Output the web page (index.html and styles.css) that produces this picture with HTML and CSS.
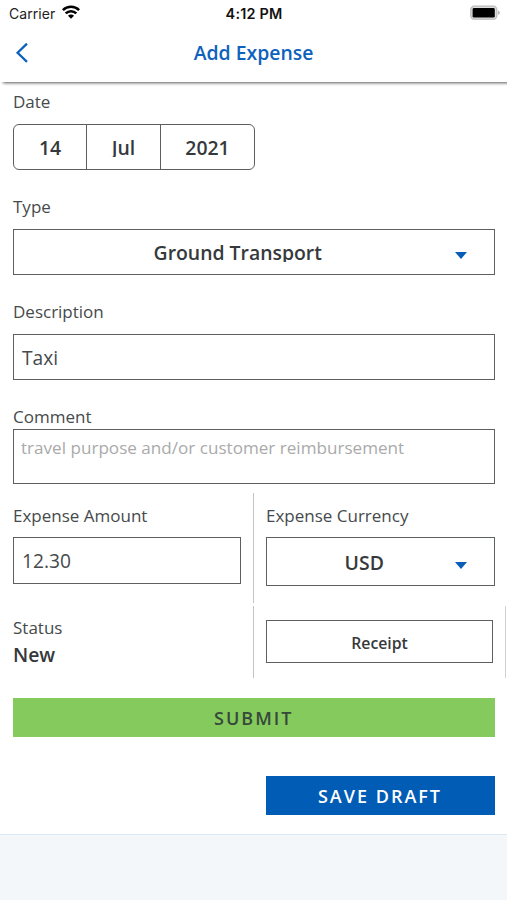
FILE: index.html
```html
<!DOCTYPE html>
<html lang="en">
<head>
<meta charset="utf-8">
<title>Add Expense</title>
<link rel="stylesheet" href="styles.css">
</head>
<body>
<div class="screen">
  <header class="top">
    <div class="status-bar">
      <div class="carrier"><span>Carrier</span>
        <svg class="wifi" viewBox="0 0 18 14" width="18" height="14"><g fill="none" stroke="#000" stroke-width="2.5"><path d="M.9 5.1a11.5 11.5 0 0 1 16.2 0"/><path d="M3.7 8.4a7.4 7.4 0 0 1 10.6 0"/></g><path d="M6 10.8a4.2 4.2 0 0 1 6 0L9 13.8z"/></svg>
      </div>
      <div class="clock">4:12 PM</div>
      <svg class="battery" viewBox="0 0 31 16" width="31" height="16"><rect x="1.8" y="1.2" width="26" height="13" rx="3.5" fill="#ddd" stroke="#bbb" stroke-width="1.3"/><rect x="3.6" y="3" width="22.2" height="9.6" rx="1.4"/><path d="M29.2 5.4q1.6 1 1.6 2.3t-1.6 2.3z" fill="#aaa"/></svg>
    </div>
    <div class="nav">
      <svg class="back" viewBox="0 0 14 22" width="14" height="22"><path d="M12 1.6L2.6 10.8l9.4 9.1" fill="none" stroke="#0d62bd" stroke-width="2.3"/></svg>
      <h1>Add Expense</h1>
    </div>
  </header>
  <main class="form">
    <section class="field">
      <div class="label">Date</div>
      <div class="date"><span><b>14</b></span><span><b class="clip">Jul</b></span><span><b>2021</b></span></div>
    </section>
    <section class="field">
      <div class="label">Type</div>
      <div class="box select"><b class="clip">Ground Transport</b><i class="caret"></i></div>
    </section>
    <section class="field">
      <div class="label">Description</div>
      <div class="box input">Taxi</div>
    </section>
    <section class="comment">
      <div class="label">Comment</div>
      <div class="box area">travel purpose and/or customer reimbursement</div>
    </section>
    <div class="row amounts">
      <section class="cell">
        <div class="label">Expense Amount</div>
        <div class="box input">12.30</div>
      </section>
      <section class="cell right">
        <div class="label">Expense Currency</div>
        <div class="box select currency"><b>USD</b><i class="caret"></i></div>
      </section>
    </div>
    <div class="row states">
      <section class="cell">
        <div class="label">Status</div>
        <div class="value">New</div>
      </section>
      <section class="cell right">
        <div class="box receipt">Receipt</div>
      </section>
    </div>
    <div class="button submit">SUBMIT</div>
    <div class="button draft">SAVE DRAFT</div>
  </main>
</div>
</body>
</html>
```
FILE: styles.css
```css
* { box-sizing: border-box; }
body {
  margin: 0;
  background: #f4f7fa;
  color: #464a4c;
  font-family: "Open Sans", "Noto Sans", sans-serif;
}
.screen {
  height: 835px;
  background: #fff;
  border-bottom: 1px solid #dce8f3;
}
.top {
  height: 82px;
  background: #fff;
  box-shadow: 3px 1px 3px rgba(0, 0, 0, .65);
}
.status-bar {
  display: grid;
  grid-template-columns: 1fr auto 1fr;
  height: 28px;
  padding: 0 7px 0 9px;
  align-items: center;
  font-family: Inter, "Liberation Sans", sans-serif;
  font-size: 14px;
  color: #222;
}
.carrier { display: flex; align-items: center; gap: 7px; letter-spacing: .05px; margin-top: -2px; }
.wifi { margin-top: -2px; }
.clock { font-size: 14.4px; font-weight: 600; color: #111; letter-spacing: .2px; margin: -2px 1px 0 0; }
.battery { justify-self: end; margin-top: -2px; }
.nav {
  display: grid;
  grid-template-columns: 14px 1fr 14px;
  height: 49px;
  padding: 0 15px;
  align-items: center;
}
.nav h1 {
  margin: 0;
  color: #0d62bd;
  font-size: 19.4px;
  font-weight: 600;
  line-height: 26px;
  text-align: center;
}
.form { padding: 7px 12.5px 0 13px; }
.field { height: 105px; }
.label { height: 34.5px; padding-top: 1px; font-size: 17px; line-height: 24px; }
.box {
  display: flex;
  height: 46.5px;
  align-items: center;
  border: 1px solid #5c6061;
}
.date {
  display: grid;
  grid-template-columns: 72px 74px 1fr;
  width: 242px;
  height: 46.5px;
  border: 1px solid #5a5e60;
  border-radius: 6px;
}
.date span {
  display: flex;
  align-items: center;
  justify-content: center;
}
.date span + span { border-left: 1px solid #5a5e60; }
.date b, .select b {
  color: #36393b;
  font-size: 19.4px;
  font-weight: 600;
  line-height: 26px;
}
.date b { padding: 2px 2px 0; }
.date .clip { height: 22px; line-height: 26px; margin-top: -2px; padding-top: 0; overflow: hidden; }
.select { padding-right: 27px; }
.select b { flex: 1; padding-left: 5px; text-align: center; }
.select .clip { height: 22px; line-height: 26px; margin-top: -1px; padding-left: 7px; overflow: hidden; }
.caret {
  margin-top: 7px;
  border: 6.5px solid transparent;
  border-top: 7px solid #075db8;
  border-bottom: 0;
}
.input { padding: 1px 8px 0; font-size: 19.2px; }
.comment .label { height: 24.5px; }
.area {
  height: 55px;
  padding: 5px 7px;
  align-items: flex-start;
  color: #aaa;
  font-size: 17.1px;
  line-height: 26px;
}
.row { display: grid; grid-template-columns: 240px 1fr; }
.cell { padding-right: 12px; }
.cell.right { padding: 0 0 0 12px; border-left: 1px solid #c4c4c4; }
.amounts { height: 110px; margin-top: 9px; }
.amounts .cell { padding-top: 10px; }
.amounts .currency { height: 49px; padding-right: 27px; }
.select.currency b { padding: 0 0 0 7px; margin-top: 3px; }
.states { height: 72px; margin: 3px -11.5px 0 0; padding-right: 0; border-right: 1px solid #d0d0d0; }
.states .cell { padding-top: 10px; }
.states .cell.right { padding: 14px 12px 0 12px; }
.states .label { height: 24px; padding-top: 0; }
.value { color: #36393b; font-size: 19.4px; font-weight: 600; line-height: 29px; }
.receipt {
  height: 43px;
  padding-top: 3px;
  justify-content: center;
  color: #36393b;
  font-size: 15.8px;
  font-weight: 600;
}
.button {
  display: flex;
  align-items: center;
  justify-content: center;
  height: 39px;
  padding-top: 2px;
  font-size: 18px;
  font-weight: 600;
  letter-spacing: 2px;
}
.submit { margin-top: 20px; background: #85ca5d; color: #36493a; }
.draft { width: 229px; margin: 39px 0 0 auto; background: #005cb5; color: #fff; }
```
